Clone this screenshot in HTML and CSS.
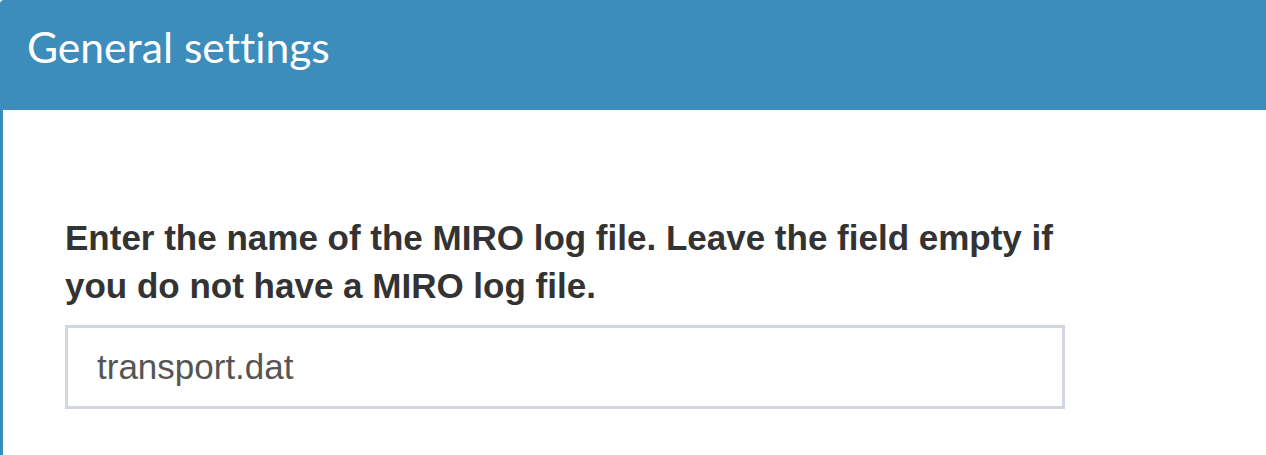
FILE: index.html
```html
<!DOCTYPE html>
<html lang="en">
<head>
<meta charset="utf-8">
<title>General settings</title>
<link rel="stylesheet" href="styles.css">
</head>
<body>
<div class="box">
  <div class="box-header">
    <h3 class="box-title">General settings</h3>
  </div>
  <div class="box-body">
    <div class="form-group">
      <label class="control-label" for="logfile">Enter the name of the MIRO log file. Leave the field empty if you do not have a MIRO log file.</label>
      <input class="form-control" id="logfile" type="text" value="transport.dat">
    </div>
  </div>
</div>
</body>
</html>
```

FILE: styles.css
```css
html, body {
  margin: 0;
  padding: 0;
  background: #ffffff;
}

body {
  width: 1266px;
  height: 455px;
  overflow: hidden;
}

.box {
  border-left: 3px solid #3c8dbc;
  border-top-left-radius: 4px;
  height: 455px;
  box-sizing: border-box;
  background: #ffffff;
}

.box-header {
  background: #3c8dbc;
  height: 110px;
  box-sizing: border-box;
  padding: 26px 0 0 24px;
}

.box-title {
  margin: 0;
  font-family: "Lato", "Open Sans", sans-serif;
  font-weight: 400;
  font-size: 42.6px;
  line-height: 1;
  color: #ffffff;
  font-variant-ligatures: none;
}

.box-body {
  padding: 104px 0 0 62px;
}

.form-group {
  width: 1000px;
  display: flex;
  flex-direction: column;
}

.control-label {
  font-family: "Liberation Sans", Arial, sans-serif;
  font-weight: 700;
  font-size: 35px;
  line-height: 48px;
  color: #333333;
  margin-bottom: 15px;
}

.form-control {
  box-sizing: border-box;
  width: 1000px;
  height: 84px;
  margin: 0;
  border: 3px solid #d2d6de;
  border-radius: 0;
  padding: 0 29px;
  font-family: "Liberation Sans", Arial, sans-serif;
  font-size: 35px;
  color: #555555;
  background: #ffffff;
  outline: none;
}
```
